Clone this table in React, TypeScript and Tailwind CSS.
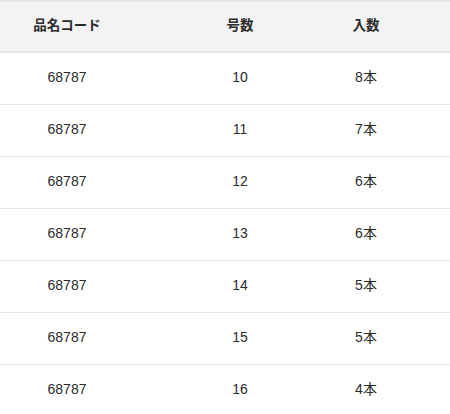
const rows = [
  { code: "68787", size: "10", qty: "8本" },
  { code: "68787", size: "11", qty: "7本" },
  { code: "68787", size: "12", qty: "6本" },
  { code: "68787", size: "13", qty: "6本" },
  { code: "68787", size: "14", qty: "5本" },
  { code: "68787", size: "15", qty: "5本" },
  { code: "68787", size: "16", qty: "4本" },
];

// 3 kolumny, wyśrodkowane jak w tabeli produktu
const cols = "grid grid-cols-[134px_212px_40px] items-center";

export default function App() {
  return (
    <div
      className="h-[414px] w-[450px] overflow-hidden bg-white text-[14px] text-[#2b2b2b]"
      style={{ fontFamily: '"Liberation Sans", "Noto Sans CJK JP", sans-serif' }}
    >
      <div className="border-t-2 border-b-2 border-[#e6e6e6] bg-[#f3f3f3]">
        <div className={`${cols} h-[49px] text-[13.5px] font-bold`}>
          <div className="text-center">品名コード</div>
          <div className="text-center">号数</div>
          <div className="text-center">入数</div>
        </div>
      </div>
      {rows.map((r) => (
        <div key={r.size} className="border-b border-[#e6e6e6]">
          <div className={`${cols} h-[51px] pb-[2px]`}>
            <div className="text-center">{r.code}</div>
            <div className="text-center">{r.size}</div>
            <div className="text-center">{r.qty}</div>
          </div>
        </div>
      ))}
    </div>
  );
}
